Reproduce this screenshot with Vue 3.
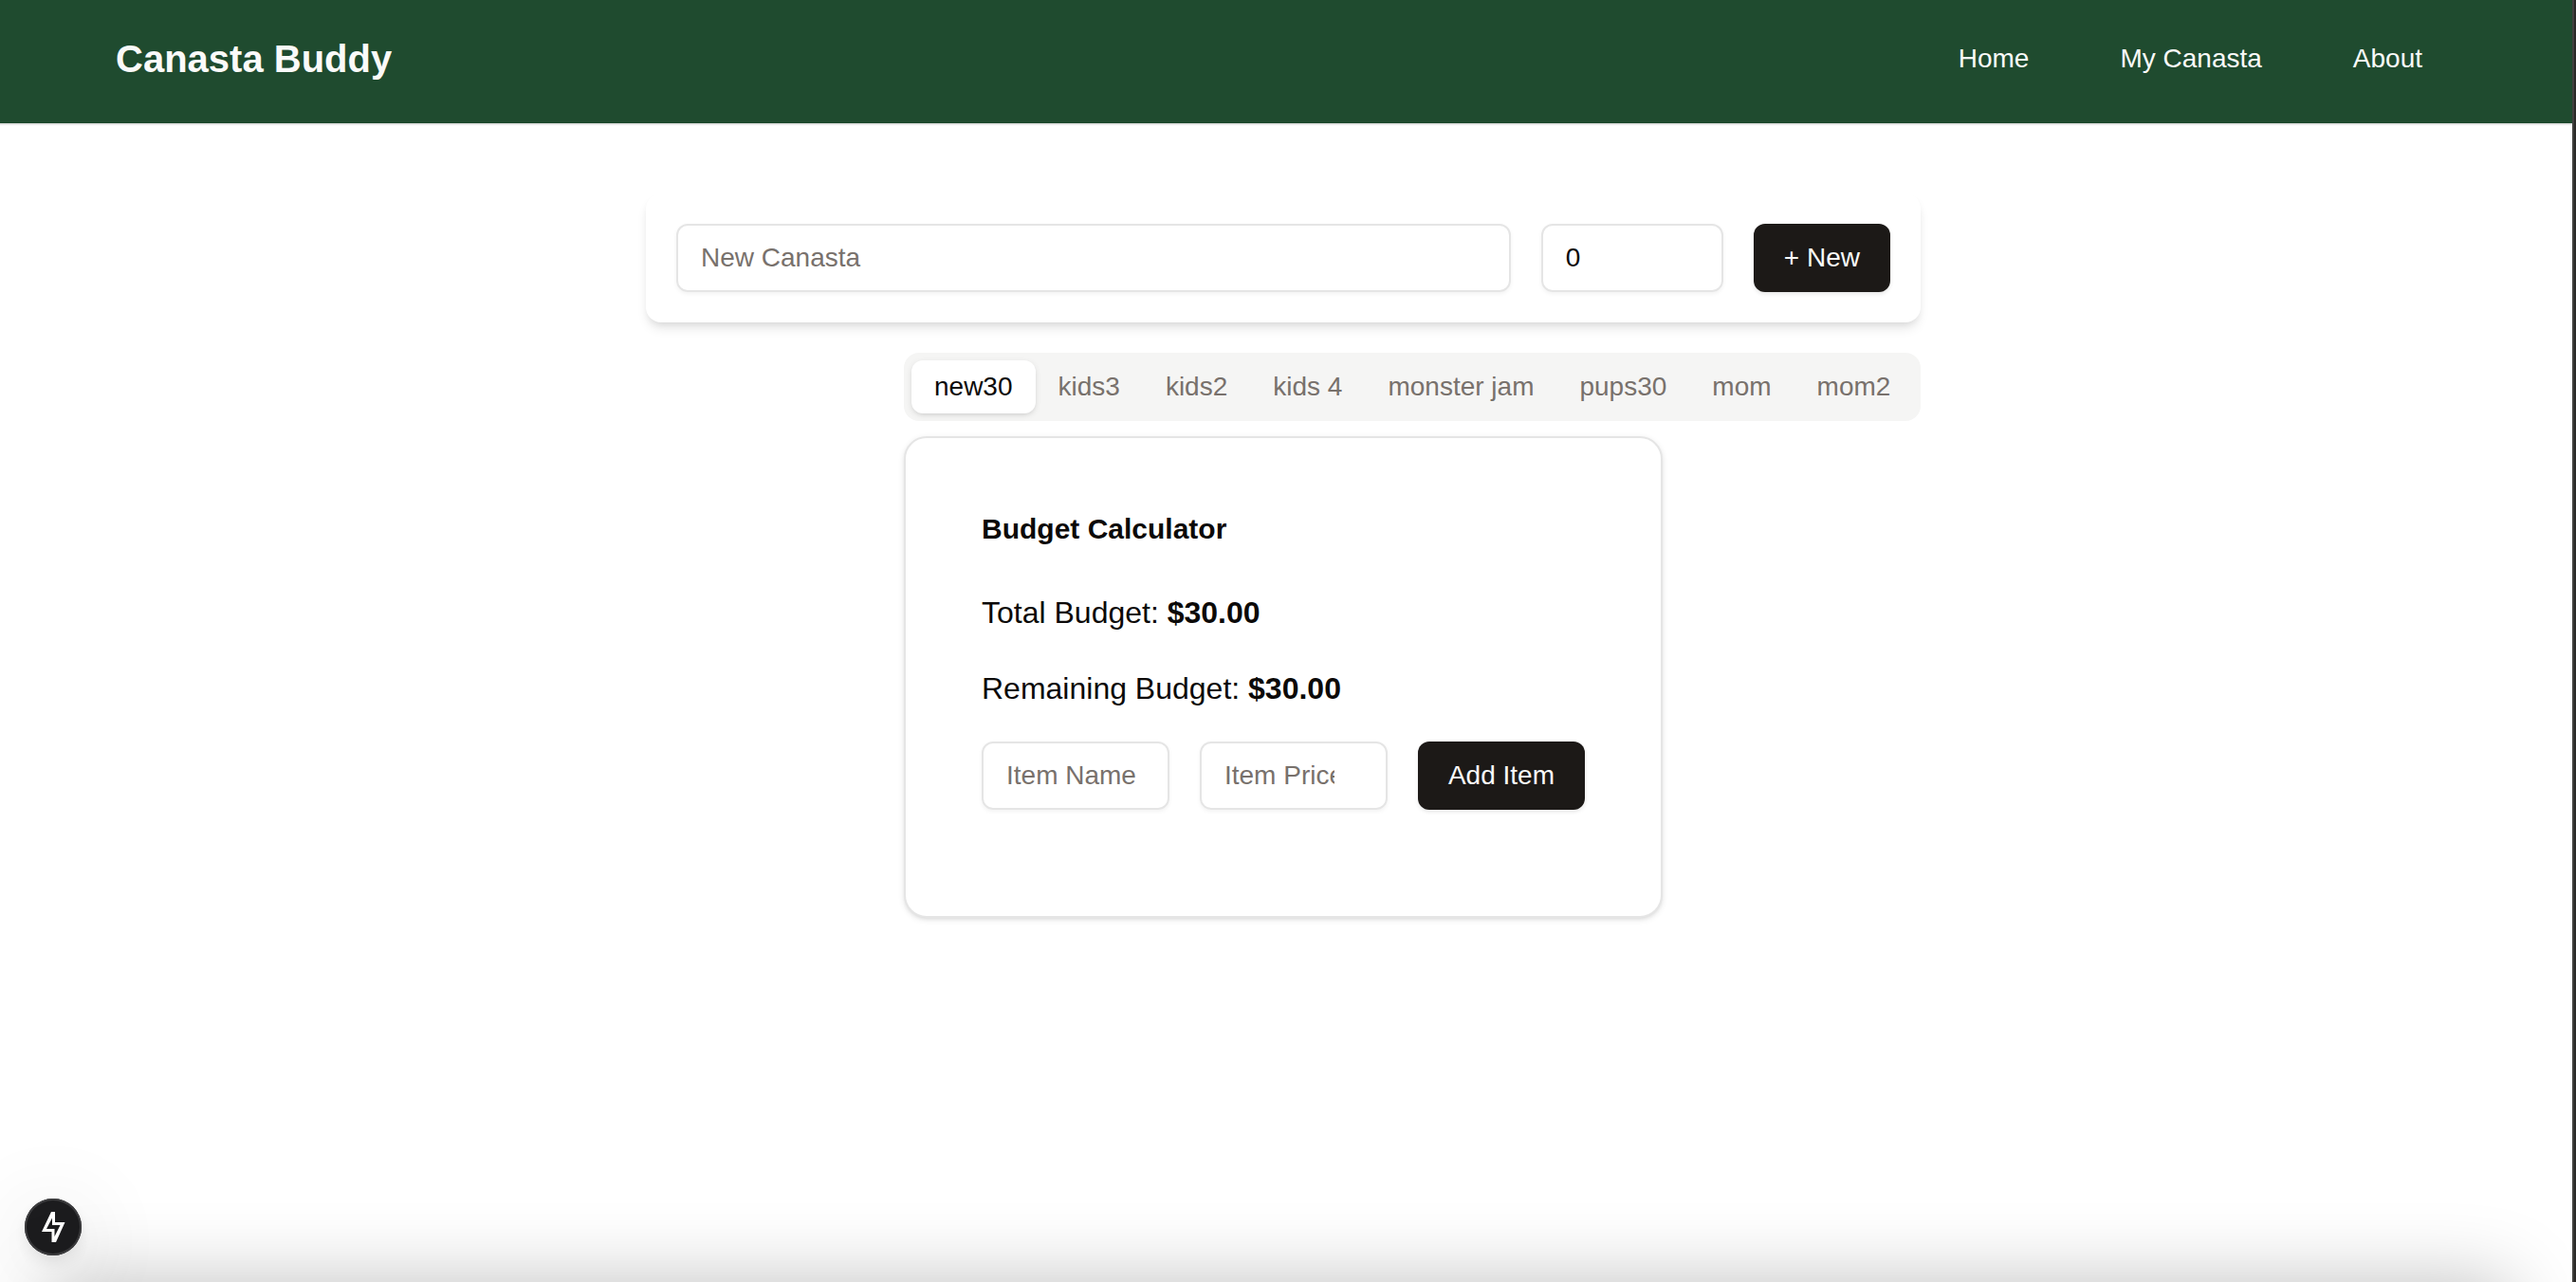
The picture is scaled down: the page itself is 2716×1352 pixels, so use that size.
<script setup>
import { ref } from 'vue'

const links = ['Home', 'My Canasta', 'About']
const tabs = ['new30', 'kids3', 'kids2', 'kids 4', 'monster jam', 'pups30', 'mom', 'mom2']
const active = ref('new30')
const newName = ref('')
const newBudget = ref(0)
const itemName = ref('')
const itemPrice = ref('')
</script>

<template>
  <div class="page">
    <header class="header">
      <a class="brand" href="#">Canasta Buddy</a>
      <nav class="nav">
        <a v-for="link in links" :key="link" href="#">{{ link }}</a>
      </nav>
    </header>

    <main class="main">
      <form class="new-form" @submit.prevent>
        <input v-model="newName" class="field grow" type="text" placeholder="New Canasta" aria-label="New Canasta" />
        <input v-model="newBudget" class="field budget" type="number" aria-label="Budget" />
        <button class="btn" type="submit">+ New</button>
      </form>

      <section class="canastas">
        <div class="tabs" role="tablist">
          <button
            v-for="tab in tabs"
            :key="tab"
            class="tab"
            :class="{ active: tab === active }"
            type="button"
            role="tab"
            :aria-selected="tab === active"
            @click="active = tab"
          >{{ tab }}</button>
        </div>

        <article class="card">
          <h2>Budget Calculator</h2>
          <p>Total Budget: <strong>$30.00</strong></p>
          <p>Remaining Budget: <strong>$30.00</strong></p>
          <form class="item-form" @submit.prevent>
            <input v-model="itemName" class="field grow" type="text" placeholder="Item Name" aria-label="Item Name" />
            <input v-model="itemPrice" class="field grow" type="number" placeholder="Item Price" aria-label="Item Price" />
            <button class="btn" type="submit">Add Item</button>
          </form>
        </article>
      </section>
    </main>

    <button class="dev" type="button" aria-label="Static route">
      <svg viewBox="0 0 60 60" width="60" height="60" aria-hidden="true">
        <path
          fill="#fff"
          fill-rule="evenodd"
          d="M28 14H32V25H42.500L33 46H28.500V35H18ZM29 20.500L23 32H31.500V40L37.500 28H29Z"
        />
      </svg>
    </button>
    <div class="dock-shade" aria-hidden="true"></div>
  </div>
</template>

<style>
body {
  margin: 0;
  background: #fff;
}
</style>

<style scoped>
.page {
  box-sizing: border-box;
  min-height: 100vh;
  position: relative;
  overflow: hidden;
  border-right: 2px solid #2a2927;
  box-shadow: inset -2px 0 0 #41403e;
  padding-right: 2px;
  font-family: "Liberation Sans", Arial, sans-serif;
  font-size: 28px;
  line-height: 40px;
  color: #0c0a09;
}

.header {
  display: flex;
  align-items: center;
  justify-content: space-between;
  box-sizing: border-box;
  height: 132px;
  padding: 0 158px 6px 122px;
  background: #1f4b2f;
  border-bottom: 2px solid #e5e5e5;
}

.header a {
  color: #fafaf9;
  text-decoration: none;
}

.header .brand {
  font-size: 40px;
  line-height: 56px;
  font-weight: 700;
}

.nav {
  display: flex;
  gap: 96px;
}

.main {
  padding: 72px 6px 0 0;
}

.new-form {
  display: flex;
  gap: 32px;
  box-sizing: border-box;
  max-width: 1344px;
  margin: 0 auto;
  padding: 32px;
  border-radius: 16px;
  background: #fff;
  box-shadow: 0 8px 12px -2px rgba(0, 0, 0, 0.1), 0 4px 8px -4px rgba(0, 0, 0, 0.1);
}

.field {
  box-sizing: border-box;
  height: 72px;
  min-width: 0;
  padding: 8px 24px;
  border: 2px solid #e5e5e5;
  border-radius: 12px;
  background: transparent;
  box-shadow: 0 2px 4px rgba(0, 0, 0, 0.05);
  font: inherit;
  color: inherit;
}

.field::placeholder {
  color: #78716c;
  opacity: 1;
}

.field::-webkit-inner-spin-button {
  appearance: none;
  width: 30px;
  margin: 0;
  opacity: 0;
}

.grow {
  flex: 1 1 0;
}

.budget {
  width: 192px;
}

.btn {
  flex: none;
  height: 72px;
  padding: 0 32px;
  border: 0;
  border-radius: 12px;
  background: #1c1917;
  box-shadow: 0 2px 4px rgba(0, 0, 0, 0.1);
  font: inherit;
  color: #fafaf9;
}

.canastas {
  max-width: 800px;
  margin: 32px auto 0;
}

.tabs {
  display: flex;
  width: max-content;
  padding: 8px;
  border-radius: 16px;
  background: #f5f5f4;
}

.tab {
  padding: 8px 24px;
  border: 0;
  border-radius: 12px;
  background: transparent;
  font: inherit;
  color: #78716c;
}

.tab.active {
  background: #fff;
  color: #0c0a09;
  box-shadow: 0 2px 6px rgba(0, 0, 0, 0.1), 0 2px 4px -2px rgba(0, 0, 0, 0.1);
}

.card {
  margin-top: 16px;
  padding: 80px 80px 112px;
  border: 2px solid #e5e5e5;
  border-radius: 24px;
  background: #fff;
  box-shadow: 0 2px 6px rgba(0, 0, 0, 0.1), 0 2px 4px -2px rgba(0, 0, 0, 0.1);
}

.card h2 {
  margin: 0 0 48px;
  font-size: 30px;
  line-height: 32px;
}

.card p {
  margin: 0 0 32px;
  font-size: 32px;
  line-height: 48px;
}

.item-form {
  display: flex;
  gap: 32px;
}

/* Floating indicator pinned to the corner of the window */
.dev {
  position: fixed;
  left: 26px;
  bottom: 28px;
  width: 60px;
  height: 60px;
  padding: 0;
  border: 0;
  border-radius: 50%;
  background: #1c1c1e;
  box-shadow: inset 0 0 0 2px #3c3c3e, 0 8px 16px rgba(0, 0, 0, 0.08), 0 16px 96px rgba(0, 0, 0, 0.16);
}

.dev svg {
  display: block;
}

/* Soft shade rising from the lower edge of the window */
.dock-shade {
  position: fixed;
  left: 60px;
  right: 70px;
  bottom: -120px;
  height: 120px;
  box-shadow: 0 0 80px rgba(0, 0, 0, 0.25);
  pointer-events: none;
}
</style>
